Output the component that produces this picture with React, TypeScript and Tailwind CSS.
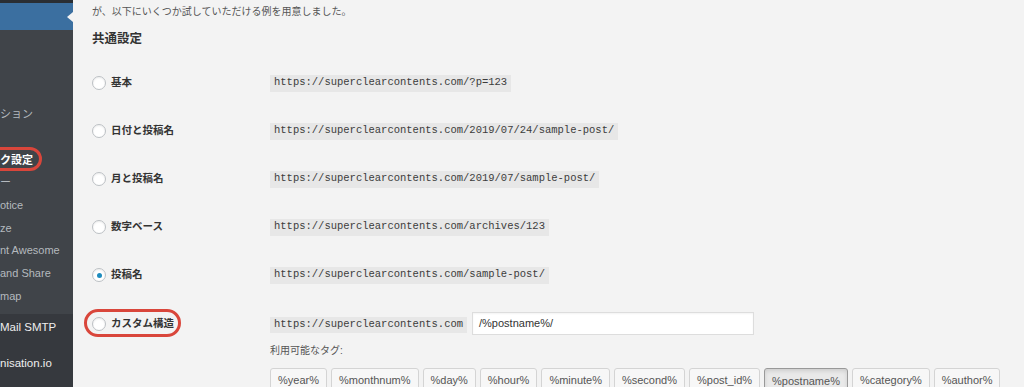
import React from "react";

const sans = "font-['Liberation_Sans','Noto_Sans_CJK_JP',sans-serif]";
const mono = "font-['Liberation_Mono','Noto_Sans_CJK_JP',monospace]";

const rows = [
  { label: "基本", url: "https://superclearcontents.com/?p=123" },
  { label: "日付と投稿名", url: "https://superclearcontents.com/2019/07/24/sample-post/" },
  { label: "月と投稿名", url: "https://superclearcontents.com/2019/07/sample-post/" },
  { label: "数字ベース", url: "https://superclearcontents.com/archives/123" },
  { label: "投稿名", url: "https://superclearcontents.com/sample-post/", checked: true },
];

const tags = [
  "%year%",
  "%monthnum%",
  "%day%",
  "%hour%",
  "%minute%",
  "%second%",
  "%post_id%",
  "%postname%",
  "%category%",
  "%author%",
];

// submenu entries; empty strings are items whose text sits fully off the left edge
const subItems = ["", "", "", "ション", "", "ク設定", "ー", "otice", "ze", "nt Awesome", "and Share", "map"];

function Radio({ checked }: { checked?: boolean }) {
  return (
    <span className="w-[14px] h-[14px] rounded-full border border-[#bcc0c4] bg-white shadow-[inset_0_1px_2px_rgba(0,0,0,0.08)] flex items-center justify-center shrink-0">
      {checked && <span className="w-[5px] h-[5px] rounded-full bg-[#1e8cbe]" />}
    </span>
  );
}

function Sidebar() {
  return (
    <div className={`w-[73px] shrink-0 flex flex-col bg-[#36393e] ${sans}`}>
      <div className="h-[3px] bg-[#2a2e33]" />
      <div className="h-[27px] bg-[#3b6fa0] relative">
        <span className="absolute right-0 top-[9px] w-0 h-0 border-y-[5px] border-y-transparent border-r-[6px] border-r-[#f3f3f3]" />
      </div>
      <div className="h-[284px] bg-[#404449] pt-[5px] overflow-hidden">
        {subItems.map((t, i) => (
          <div
            key={i}
            className={`h-[22.7px] flex items-center whitespace-nowrap text-[11px] ${
              t === "ク設定" ? "text-white font-bold relative" : "text-[#b4b9be]"
            }`}
          >
            {t}
            {t === "ク設定" && (
              <span className="absolute -left-[20px] top-[-1px] w-[62px] h-[24px] rounded-full border-[3px] border-[#d9463b]" />
            )}
          </div>
        ))}
      </div>
      <div className="pt-[3px] text-[11.5px] text-[#eeeeee] whitespace-nowrap overflow-hidden">
        <div className="h-[22px] flex items-center">Mail SMTP</div>
        <div className="h-[22px] mt-[14px] flex items-center">nisation.io</div>
      </div>
    </div>
  );
}

export default function App() {
  return (
    <div className="w-[1024px] h-[387px] overflow-hidden flex bg-[#f3f3f3]">
      <Sidebar />
      <div className={`flex-1 pl-[19px] pt-[2px] ${sans}`}>
        <p className="h-[18px] flex items-center text-[10px] text-[#555]">
          が、以下にいくつか試していただける例を用意しました。
        </p>
        <h2 className="mt-[9px] h-[20px] flex items-center text-[12.5px] font-bold text-[#333]">共通設定</h2>

        <div className="mt-[10px]">
          {rows.map((r) => (
            <div key={r.label} className="h-[48px] flex items-center">
              <div className="w-[178px] flex items-center gap-[5px]">
                <Radio checked={r.checked} />
                <span className="text-[10.5px] font-semibold text-[#333]">{r.label}</span>
              </div>
              <code className={`bg-[#e7e7e7] px-[4px] h-[17px] flex items-center text-[10.5px] text-[#3c3c3c] ${mono}`}>
                {r.url}
              </code>
            </div>
          ))}

          <div className="pt-[13px] flex items-center">
            <div className="w-[178px] flex items-center">
              <div className="relative flex items-center gap-[5px]">
                <span className="absolute -left-[8px] -top-[7px] w-[97px] h-[28px] rounded-full border-[3px] border-[#d9463b]" />
                <Radio />
                <span className="text-[10.5px] font-semibold text-[#333]">カスタム構造</span>
              </div>
            </div>
            <code className={`bg-[#e7e7e7] px-[4px] h-[16px] mt-[3px] flex items-center text-[10.5px] text-[#3c3c3c] ${mono}`}>
              https://superclearcontents.com
            </code>
            <div className="ml-[5px] w-[282px] h-[23px] bg-white border border-[#dddddd] shadow-[inset_0_1px_2px_rgba(0,0,0,0.05)] flex items-center px-[6px] text-[11px] text-[#333]">
              /%postname%/
            </div>
          </div>

          <div className="pl-[178px]">
            <p className="mt-[7px] h-[16px] flex items-center text-[10px] text-[#555]">利用可能なタグ:</p>
            <div className="mt-[10px] flex gap-[4px]">
              {tags.map((t) => (
                <button
                  key={t}
                  className={`h-[24px] px-[7px] rounded-[3px] border text-[11px] text-[#555] ${
                    t === "%postname%"
                      ? "bg-[#e9e9e9] border-[#999] shadow-[inset_0_2px_4px_rgba(0,0,0,0.12)] pt-[2px]"
                      : "bg-[#f7f7f7] border-[#d4d4d4]"
                  }`}
                >
                  {t}
                </button>
              ))}
            </div>
          </div>
        </div>
      </div>
    </div>
  );
}
